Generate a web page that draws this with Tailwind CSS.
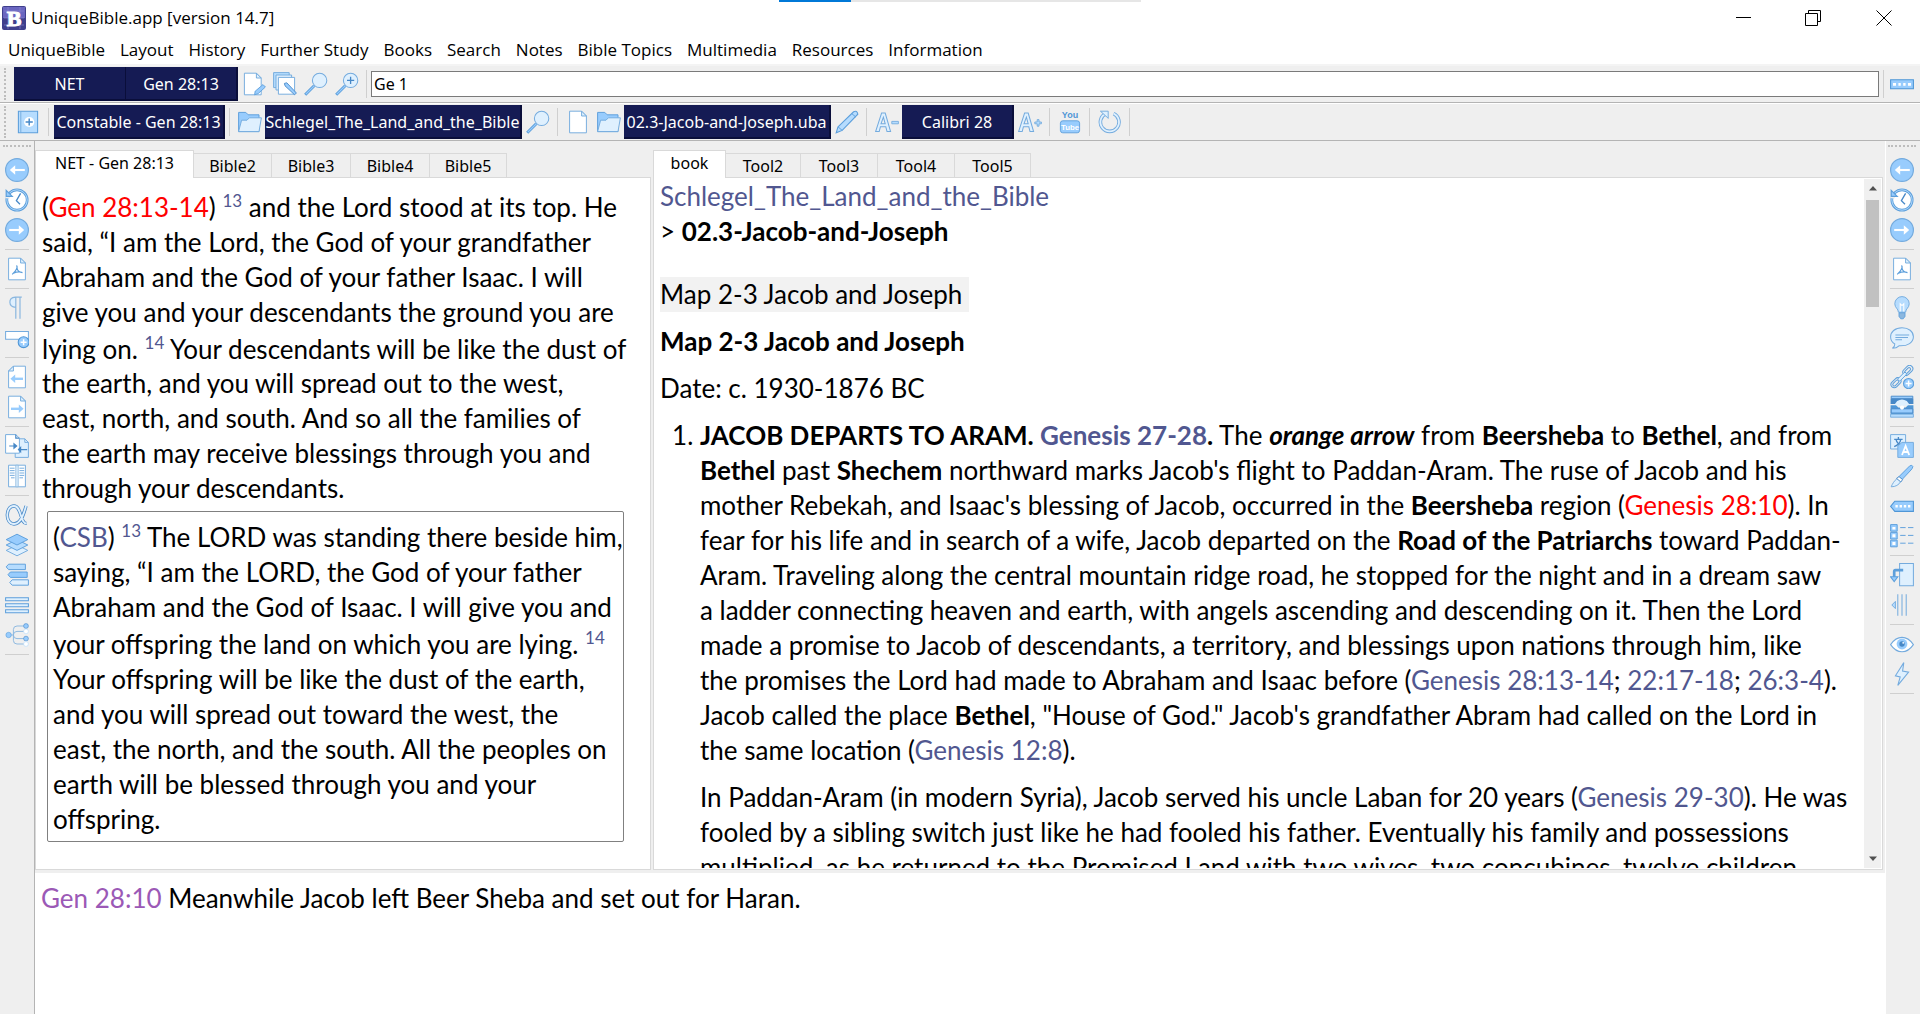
<!DOCTYPE html>
<html lang="en">
<head>
<meta charset="utf-8">
<title>UniqueBible.app</title>
<script src="https://cdn.jsdelivr.net/npm/@tailwindcss/browser@4"></script>
</head>
<body class="bg-white text-black font-['Open_Sans',sans-serif]">

<!-- Shared icon shapes -->
<svg class="hidden">
  <symbol id="left" viewBox="0 0 40 40"><circle cx="20" cy="20" r="19" fill="#98ccfd" stroke="#74abde" stroke-width="2"/><path d="M33 20H12" stroke="#fff" stroke-width="3.5"/><path d="M17 12 8 20l9 8z" fill="#fff"/></symbol>
  <symbol id="right" viewBox="0 0 40 40"><circle cx="20" cy="20" r="19" fill="#98ccfd" stroke="#74abde" stroke-width="2"/><path d="M7 20h21" stroke="#fff" stroke-width="3.5"/><path d="m23 12 9 8-9 8z" fill="#fff"/></symbol>
  <symbol id="clock" viewBox="0 0 40 40"><circle cx="20" cy="20" r="17" fill="#fff" stroke="#5d9fdb" stroke-width="4.5"/><circle cx="20" cy="20" r="17" fill="none" stroke="#b6dcfe" stroke-width="1.5"/><path d="M0 9h5l4 8H1z" fill="#efefef"/><path d="M2 4v10h10z" fill="#98ccfd" stroke="#5d9fdb" stroke-width="2"/><path d="m26 9-7 12 6 6" fill="none" stroke="#4788c7" stroke-width="2.2"/></symbol>
  <symbol id="pdf" viewBox="0 0 40 40"><path d="M6 2h20l8 8v28H6z" fill="#fff" stroke="#74abde" stroke-width="1.6"/><path d="M26 2v8h8z" fill="#dff0fe" stroke="#74abde" stroke-width="1.6"/><path d="M19 14c3 2 0 9-7 15m8-10c2 6 5 7 9 7-5-2-10-1-15 1" fill="none" stroke="#5d9fdb" stroke-width="2"/></symbol>
  <symbol id="pilcrow" viewBox="0 0 40 40"><path d="M18 2c-14 0-14 17 0 17z" fill="#dff0fe"/><path d="M28 2H17C5 3 5 18 18 19M18 2v36M25 2v36" fill="none" stroke="#8bb7df" stroke-width="2"/></symbol>
  <symbol id="addbar" viewBox="0 0 40 40"><path d="M1 4h38v13H1z" fill="#fff" stroke="#74abde" stroke-width="1.7"/><circle cx="31" cy="22" r="9" fill="#98ccfd" stroke="#4f96d6" stroke-width="1.8"/><path d="M31 17v10m-5-5h10" stroke="#fff" stroke-width="2.5"/></symbol>
  <symbol id="pageleft" viewBox="0 0 40 40"><path d="M34 2H14L6 10v28h28z" fill="#fff" stroke="#74abde" stroke-width="1.6"/><path d="M14 2v8H6z" fill="#dff0fe" stroke="#74abde" stroke-width="1.6"/><path d="M30 23H16" stroke="#98ccfd" stroke-width="4"/><path d="m17 16-8 7 8 7z" fill="#98ccfd"/></symbol>
  <symbol id="pageright" viewBox="0 0 40 40"><path d="M6 2h20l8 8v28H6z" fill="#fff" stroke="#74abde" stroke-width="1.6"/><path d="M26 2v8h8z" fill="#dff0fe" stroke="#74abde" stroke-width="1.6"/><path d="M10 23h14" stroke="#98ccfd" stroke-width="4"/><path d="m23 16 8 7-8 7z" fill="#98ccfd"/></symbol>
  <symbol id="compare" viewBox="0 0 40 40"><path d="M17 8h16l6 6v25H17z" fill="#dff0fe" stroke="#74abde" stroke-width="1.6"/><path d="M33 8v6h6" fill="none" stroke="#74abde" stroke-width="1.6"/><path d="M1 1h17l6 6v25H1z" fill="#fff" stroke="#74abde" stroke-width="1.6"/><path d="M18 1v6h6M7 20h9m10 6h11" fill="none" stroke="#4788c7" stroke-width="2"/><path d="m14 14 7 6-7 6zm13 6-6 6 6 6z" fill="#4788c7"/></symbol>
  <symbol id="columns" viewBox="0 0 40 40"><path d="M6 2h28v36H6z" fill="#fff" stroke="#74abde" stroke-width="1.6"/><path d="M18 2h4v36h-4z" fill="#dff0fe" stroke="#8bb7df" stroke-width="1.4"/><path d="M8 7h8m8 0h8M8 11h8m8 0h8M8 15h8m8 0h8M8 19h8m8 0h8M10 23h6m8 0h6" stroke="#74abde" stroke-width="1.6"/></symbol>
  <symbol id="alpha" viewBox="0 0 40 40"><path d="M35 5c-4 15-9 30-20 30C0 35 0 5 15 5c13 0 10 30 21 29" fill="none" stroke="#4788c7" stroke-width="5.5"/><path d="M35 5c-4 15-9 30-20 30C0 35 0 5 15 5c13 0 10 30 21 29" fill="none" stroke="#dff0fe" stroke-width="3"/></symbol>
  <symbol id="layers" viewBox="0 0 40 40"><path d="m2 29 18-9 18 9-18 9z" fill="#dff0fe" stroke="#74abde" stroke-width="1.6"/><path d="m2 20 18-9 18 9-18 9z" fill="#b6dcfe" stroke="#5d9fdb" stroke-width="1.6"/><path d="m2 11 18-9 18 9-18 9z" fill="#98ccfd" stroke="#5d9fdb" stroke-width="1.6"/></symbol>
  <symbol id="tags" viewBox="0 0 40 40"><path d="M6 2h28v9H6L2 6.500z" fill="#b6dcfe" stroke="#5d9fdb" stroke-width="1.6"/><path d="M9 15h28v9H9l-4-4.500z" fill="#98ccfd" stroke="#5d9fdb" stroke-width="1.600"/><path d="M12 28h27v9H12l-4-4.500z" fill="#dff0fe" stroke="#5d9fdb" stroke-width="1.600"/></symbol>
  <symbol id="rows" viewBox="0 0 40 40"><path d="M1 8h38v5H1zM1 18h38v5H1zM1 28h38v5H1z" fill="#dff0fe" stroke="#5d9fdb" stroke-width="1.700"/></symbol>
  <symbol id="tree" viewBox="0 0 40 40"><path d="M33 5H20q-6 0-6 6v18q0 6 6 6h13M6 20h8m0 0q0-6 6-6h13M14 20q0 6 6 6h13" fill="none" stroke="#8bb7df" stroke-width="1.600"/><circle cx="6" cy="20" r="4.500" fill="#98ccfd" stroke="#5d9fdb"/><circle cx="35" cy="5" r="4" fill="#98ccfd" stroke="#4788c7"/><circle cx="35" cy="14" r="4" fill="#fff" stroke="#b6dcfe"/><circle cx="35" cy="26" r="4" fill="#98ccfd" stroke="#4788c7"/><circle cx="35" cy="35" r="4" fill="#fff" stroke="#b6dcfe"/></symbol>
  <symbol id="bulb" viewBox="0 0 40 40"><path d="M14 27C14 21 8 20 8 13a12 12 0 0 1 24 0c0 7-6 8-6 14z" fill="#b6dcfe" stroke="#74abde" stroke-width="1.600"/><path d="M17 26V13l3 3 3-3v13" fill="none" stroke="#fff" stroke-width="1.800"/><path d="M15 28h10v6l-3 4h-4l-3-4z" fill="#8bb7df" stroke="#5d9fdb" stroke-width="1.500"/></symbol>
  <symbol id="chat" viewBox="0 0 40 40"><path d="M20 3C8 3 1 10 1 18c0 6 3 10 7 12 0 4-2 6-4 7 5 0 9-2 11-4 15 1 24-6 24-15S31 3 20 3z" fill="#dff0fe" stroke="#74abde" stroke-width="1.700"/><path d="M9 15h23M9 19h21M9 23h11" stroke="#74abde" stroke-width="1.700"/></symbol>
  <symbol id="link" viewBox="0 0 40 40"><g fill="none" stroke="#5d9fdb" stroke-width="1.700"><rect x="20" y="4" width="19" height="11" rx="5.500" transform="rotate(-45 29 9)"/><rect x="23" y="7" width="12" height="5" rx="2.500" transform="rotate(-45 29 9)"/><rect x="0" y="24" width="19" height="11" rx="5.500" transform="rotate(-45 10 29)"/><rect x="3" y="27" width="12" height="5" rx="2.500" transform="rotate(-45 10 29)"/></g><rect x="11" y="17" width="18" height="5" rx="2.500" fill="#dff0fe" stroke="#5d9fdb" stroke-width="1.500" transform="rotate(-45 20 19)"/><circle cx="31" cy="31" r="8.500" fill="#98ccfd" stroke="#5d9fdb" stroke-width="1.800"/><path d="M31 26v10m-5-5h10" stroke="#fff" stroke-width="2.500"/></symbol>
  <symbol id="archive" viewBox="0 0 40 40"><path d="M2 2h36v4H2z" fill="#98ccfd" stroke="#4788c7" stroke-width="1.500"/><path d="M1 6h38v9H1z" fill="#4788c7"/><path d="m6 18 6-8q8-5 16 0l6 8z" fill="#dff0fe"/><path d="M1 17h9l4 4h12l4-4h9v15H1z" fill="#4f96d6"/><path d="M2 23h36v7H2z" fill="#98ccfd" stroke="#4788c7" stroke-width="1.500"/><circle cx="20" cy="21" r="3.500" fill="#fff"/><path d="M1 32h38v5H1z" fill="#b6dcfe" stroke="#74abde" stroke-width="1.500"/></symbol>
  <symbol id="translate" viewBox="0 0 40 40"><path d="M1 1h25v24H1z" fill="#dff0fe" stroke="#74abde" stroke-width="1.600"/><path d="M7 9h14M14 5v4m4 0c-1 6-5 10-11 12m3-12c1 5 5 9 11 11" fill="none" stroke="#4788c7" stroke-width="2.200"/><path d="M13 39V20l7-6h19v25z" fill="#98ccfd" stroke="#74abde" stroke-width="1.600"/><path d="m20 35 6-15 6 15m-10-5h8" fill="none" stroke="#fff" stroke-width="3"/></symbol>
  <symbol id="scalpel" viewBox="0 0 40 40"><path d="M15 21 33 3q4-2 5 1 0 3-3 6L20 26z" fill="#98ccfd" stroke="#5d9fdb" stroke-width="1.600"/><path d="m12 24 6 5C15 35 9 38 2 38c2-5 5-10 10-14z" fill="#dff0fe" stroke="#74abde" stroke-width="1.600"/><path d="m11 24 7 6 3-4-6-5z" fill="#fff" stroke="#4788c7" stroke-width="1.600"/></symbol>
  <symbol id="tagdots" viewBox="0 0 40 40"><path d="M8 12h31v17H8l-7-8.500z" fill="#98ccfd" stroke="#4f96d6" stroke-width="1.800"/><path d="M9 20.500h4m3 0h4m3 0h4m3 0h4" stroke="#fff" stroke-width="4"/></symbol>
  <symbol id="list" viewBox="0 0 40 40"><path d="M1 1h11v11H1zM1 14h11v11H1zM1 27h11v11H1z" fill="#98ccfd" stroke="#5d9fdb" stroke-width="1.600"/><path d="M4 5h5v4H4zM4 17h5v5H4zM4 30h5v5H4z" fill="#fff"/><path d="M17 6h9m4 0h9M17 19h9m4 0h9M17 32h9m4 0h9" stroke="#5d9fdb" stroke-width="1.600"/></symbol>
  <symbol id="dock" viewBox="0 0 40 40"><path d="M16 1h23v37H16z" fill="#dff0fe" stroke="#74abde" stroke-width="1.700"/><path d="M22 12H9q-2 0-2 3v13" fill="none" stroke="#5d9fdb" stroke-width="4.500"/><path d="M1 23h12l-6 8z" fill="#98ccfd" stroke="#5d9fdb" stroke-width="1.800"/></symbol>
  <symbol id="collapse" viewBox="0 0 40 40"><path d="M9 14v12l-6-6z" fill="#b6dcfe" stroke="#74abde" stroke-width="1.600"/><path d="M13 2v36M20 2v36M27 2v36" stroke="#74abde" stroke-width="1.700"/></symbol>
  <symbol id="eye" viewBox="0 0 40 40"><path d="M1 21C12 5 28 5 39 21 28 37 12 37 1 21z" fill="#fff" stroke="#74abde" stroke-width="1.800"/><circle cx="20" cy="20" r="9" fill="#98ccfd"/><circle cx="20" cy="20" r="4.500" fill="#4788c7"/><circle cx="22" cy="18" r="1.500" fill="#fff"/></symbol>
  <symbol id="bolt" viewBox="0 0 40 40"><path d="M23 1 9 23l8 2-4 14 18-22-10-2z" fill="#dff0fe" stroke="#74abde" stroke-width="1.800"/></symbol>
  <symbol id="edit" viewBox="0 0 40 40"><path d="M4 2h20l8 8v28H4z" fill="#fff" stroke="#74abde" stroke-width="1.600"/><path d="M24 2v8h8z" fill="#dff0fe" stroke="#74abde" stroke-width="1.600"/><path d="m22 32 13-11 4 4-12 11-6 2z" fill="#98ccfd" stroke="#5d9fdb" stroke-width="1.500"/></symbol>
  <symbol id="copyedit" viewBox="0 0 40 40"><path d="M1 1h26v25H1z" fill="#b6dcfe" stroke="#74abde" stroke-width="1.600"/><path d="M5 5h26v25H5z" fill="#dff0fe" stroke="#74abde" stroke-width="1.600"/><path d="M9 9h27v28H9z" fill="#fff" stroke="#74abde" stroke-width="1.600"/><path d="m19 19 4-1 16 17-3 3-16-15z" fill="#98ccfd" stroke="#4788c7" stroke-width="1.500"/></symbol>
  <symbol id="search" viewBox="0 0 40 40"><path d="M17 23 2 38" stroke="#5d9fdb" stroke-width="5"/><path d="M17 23 3 37" stroke="#98ccfd" stroke-width="2"/><circle cx="26" cy="14" r="12" fill="#dff0fe" stroke="#74abde" stroke-width="1.700"/></symbol>
  <symbol id="zoomin" viewBox="0 0 40 40"><path d="M17 23 2 38" stroke="#5d9fdb" stroke-width="5"/><path d="M17 23 3 37" stroke="#98ccfd" stroke-width="2"/><circle cx="26" cy="14" r="12" fill="#dff0fe" stroke="#74abde" stroke-width="1.700"/><path d="M26 8v12m-6-6h12" stroke="#4788c7" stroke-width="2.200"/></symbol>
  <symbol id="page" viewBox="0 0 40 40"><path d="M6 2h20l8 8v28H6z" fill="#fff" stroke="#74abde" stroke-width="1.600"/><path d="M26 2v8h8z" fill="#dff0fe" stroke="#74abde" stroke-width="1.600"/></symbol>
  <symbol id="folder" viewBox="0 0 40 40"><path d="M1 36V4h12l4 4h18v28z" fill="#98ccfd" stroke="#5d9fdb" stroke-width="1.600"/><path d="M1 36 6 17h9l4-4h20l-4 23z" fill="#dff0fe" stroke="#74abde" stroke-width="1.600"/></symbol>
  <symbol id="book" viewBox="0 0 40 40"><path d="M4 2h32v36H4z" fill="#b6dcfe" stroke="#5d9fdb" stroke-width="1.800"/><path d="M8 2v36" stroke="#74abde" stroke-width="1.600"/><circle cx="22" cy="20" r="8.500" fill="#fff"/><path d="M22 14v12m-6-6h12" stroke="#4788c7" stroke-width="2.400"/></symbol>
  <symbol id="pencil" viewBox="0 0 40 40"><path d="m5 28 26-25q6-3 7 4L12 34 2 38z" fill="#b6dcfe" stroke="#5d9fdb" stroke-width="1.800"/><path d="m5 28 7 6M28 6l7 6" stroke="#5d9fdb" stroke-width="1.600"/></symbol>
  <symbol id="fontdown" viewBox="0 0 40 40"><path d="M1 36 11 5h6l9 31h-6l-2-8h-9l-2 8zM14 12l-4 11h7z" fill="#dff0fe" stroke="#74abde" stroke-width="1.700"/><path d="M28 19h11v4H28z" fill="#b6dcfe" stroke="#74abde" stroke-width="1.500"/></symbol>
  <symbol id="fontup" viewBox="0 0 40 40"><path d="M1 36 11 5h6l9 31h-6l-2-8h-9l-2 8zM14 12l-4 11h7z" fill="#dff0fe" stroke="#74abde" stroke-width="1.700"/><path d="M32 16h3v4h4v3h-4v4h-3v-4h-4v-3h4z" fill="#b6dcfe" stroke="#74abde" stroke-width="1.500"/></symbol>
  <symbol id="youtube" viewBox="0 0 40 40"><rect x="4" y="18" width="32" height="20" rx="4" fill="#98ccfd" stroke="#5d9fdb" stroke-width="1.500"/><text x="20" y="14" text-anchor="middle" font-family="Liberation Sans" font-weight="bold" font-size="15" fill="#4f96d6">You</text><text x="20" y="34" text-anchor="middle" font-family="Liberation Sans" font-weight="bold" font-size="13" fill="#fff">Tube</text></symbol>
  <symbol id="reload" viewBox="0 0 40 40"><path d="M26 6a15.500 15.500 0 1 1-13 0" fill="none" stroke="#74abde" stroke-width="6"/><path d="M26 6a15.500 15.500 0 1 1-13 0" fill="none" stroke="#dff0fe" stroke-width="3"/><path d="M4 2h13v12l-4-4z" fill="#dff0fe" stroke="#74abde" stroke-width="1.600"/></symbol>
  <symbol id="password" viewBox="0 0 40 40"><path d="M1 13h38v15H1z" fill="#98ccfd" stroke="#4f96d6" stroke-width="1.800"/><path d="M5 20.500h5m4 0h4m4 0h4m4 0h5" stroke="#fff" stroke-width="4.500"/></symbol>
</svg>

<div class="flex h-screen flex-col overflow-hidden">
  <!-- Title bar -->
  <header class="relative flex h-9 shrink-0 items-center pl-0.5">
    <div class="absolute left-[779px] top-0 flex h-0.5 w-[362px] bg-[#e6e6e6]"><div class="w-[72px] bg-[#0078d7]"></div></div>
    <svg class="size-6" viewBox="0 0 24 24" aria-hidden="true"><rect width="24" height="24" rx="2" fill="#3f3f8c"/><rect x="1" y="1" width="22" height="11" fill="#6a66c0"/><path d="M2 5h20M2 12h20M2 19h20M6 1v22M18 1v22" stroke="#8d8bd0" stroke-width=".6"/><text x="12" y="20" text-anchor="middle" font-family="Liberation Serif" font-weight="bold" font-size="22" fill="#fff" stroke="#fff">B</text></svg>
    <h1 class="ml-[5px] text-[17px]">UniqueBible.app [version 14.7]</h1>
    <div class="ml-auto flex items-center pr-7">
      <button aria-label="Minimize" class="mr-[53px]"><svg class="size-4" viewBox="0 0 16 16"><path d="M0 7.500h15" stroke="#000"/></svg></button>
      <button aria-label="Restore" class="mr-[55px]"><svg class="size-4" viewBox="0 0 16 16" fill="none" stroke="#000"><path d="M3.500 3.500v-3h12v11h-3M.5 3.500h12v12H.5z"/></svg></button>
      <button aria-label="Close"><svg class="size-4" viewBox="0 0 16 16"><path d="m.5.5 15 15m0-15-15 15" stroke="#000"/></svg></button>
    </div>
  </header>

  <nav class="flex h-[28px] shrink-0 items-center gap-[15px] pl-2 text-[17px]">
    <a href="#">UniqueBible</a><a href="#">Layout</a><a href="#">History</a><a href="#">Further Study</a><a href="#">Books</a><a href="#">Search</a><a href="#">Notes</a><a href="#">Bible Topics</a><a href="#">Multimedia</a><a href="#">Resources</a><a href="#">Information</a>
  </nav>

  <!-- Verse toolbar -->
  <div class="flex h-[39px] shrink-0 items-center border-b border-t-2 border-b-[#b4b4b4] border-t-[#f4f4f4] bg-[#efefef] font-['Noto_Sans',sans-serif] text-[16px]">
    <div class="ml-1 mr-2 h-8 border-l-2 border-dotted border-[#bdbdbd]"></div>
    <button class="h-[34px] w-28 border-b-2 border-r border-[#0a0e3a] bg-[#151b54] pt-0.5 text-white">NET</button>
    <button class="h-[34px] w-28 border-b-2 border-r-2 border-[#0a0e3a] bg-[#151b54] pt-0.5 text-white">Gen 28:13</button>
    <button aria-label="Edit note" class="flex w-[31px] justify-center"><svg class="size-6"><use href="#edit"/></svg></button>
    <button aria-label="Edit notes" class="flex w-[31px] justify-center"><svg class="size-6"><use href="#copyedit"/></svg></button>
    <button aria-label="Search" class="flex w-[31px] justify-center"><svg class="size-6"><use href="#search"/></svg></button>
    <button aria-label="Search more" class="flex w-[31px] justify-center"><svg class="size-6"><use href="#zoomin"/></svg></button>
    <div class="mx-1 h-7 w-px bg-[#cfcfcf]"></div>
    <input aria-label="Command" value="Ge 1" class="h-[26px] min-w-0 flex-1 border border-[#7a7a7a] bg-white px-0.5">
    <div class="ml-1 h-7 w-px bg-[#cfcfcf]"></div>
    <button aria-label="Toggle bars" class="flex w-9 justify-center"><svg class="size-6"><use href="#password"/></svg></button>
  </div>

  <!-- Resource toolbar -->
  <div class="flex h-[38px] shrink-0 items-center border-b border-t border-b-[#b4b4b4] border-t-white bg-[#efefef] font-['Noto_Sans',sans-serif] text-[16px]">
    <div class="ml-1 mr-[7px] h-8 border-l-2 border-dotted border-[#bdbdbd]"></div>
    <button aria-label="Commentary" class="flex w-[30px] justify-center"><svg class="size-6"><use href="#book"/></svg></button>
    <div class="mx-[5px] h-7 w-px bg-[#cfcfcf]"></div>
    <button class="h-[34px] w-[171px] border-b-2 border-r-2 border-[#0a0e3a] bg-[#151b54] pt-0.5 text-white">Constable - Gen 28:13</button>
    <div class="mx-1 h-7 w-px bg-[#cfcfcf]"></div>
    <button aria-label="Open book" class="flex w-[31px] justify-center"><svg class="size-6"><use href="#folder"/></svg></button>
    <button class="h-[34px] w-[257px] border-b-2 border-r-2 border-[#0a0e3a] bg-[#151b54] pt-0.5 text-white">Schlegel_The_Land_and_the_Bible</button>
    <button aria-label="Search book" class="flex w-[31px] justify-center"><svg class="size-6"><use href="#search"/></svg></button>
    <div class="mx-1 h-7 w-px bg-[#cfcfcf]"></div>
    <button aria-label="New note" class="flex w-[31px] justify-center"><svg class="size-6"><use href="#page"/></svg></button>
    <button aria-label="Open note" class="flex w-[31px] justify-center"><svg class="size-6"><use href="#folder"/></svg></button>
    <button class="h-[34px] w-[207px] border-b-2 border-r-2 border-[#0a0e3a] bg-[#151b54] pt-0.5 text-white">02.3-Jacob-and-Joseph.uba</button>
    <button aria-label="Edit" class="flex w-[31px] justify-center"><svg class="size-6"><use href="#pencil"/></svg></button>
    <div class="mx-1 h-7 w-px bg-[#cfcfcf]"></div>
    <button aria-label="Smaller font" class="flex w-[31px] justify-center"><svg class="size-6"><use href="#fontdown"/></svg></button>
    <button class="h-[34px] w-28 border-b-2 border-r-2 border-[#0a0e3a] bg-[#151b54] pt-0.5 text-white">Calibri 28</button>
    <button aria-label="Larger font" class="flex w-[31px] justify-center"><svg class="size-6"><use href="#fontup"/></svg></button>
    <div class="mx-1 h-7 w-px bg-[#cfcfcf]"></div>
    <button aria-label="YouTube" class="flex w-[31px] justify-center"><svg class="size-6"><use href="#youtube"/></svg></button>
    <div class="mx-1 h-7 w-px bg-[#cfcfcf]"></div>
    <button aria-label="Reload" class="flex w-[31px] justify-center"><svg class="size-6"><use href="#reload"/></svg></button>
    <div class="mx-1 h-7 w-px bg-[#cfcfcf]"></div>
  </div>

  <main class="flex min-h-0 flex-1 bg-[#efefef]">
    <!-- Left icon bar -->
    <aside class="flex w-[35px] shrink-0 flex-col items-center border-r border-[#b4b4b4] pt-1">
      <div class="mb-2 w-7 border-t-2 border-dotted border-[#bdbdbd]"></div>
      <button aria-label="Back" class="flex h-[30px] items-center"><svg class="size-6"><use href="#left"/></svg></button>
      <button aria-label="History" class="flex h-[30px] items-center"><svg class="size-6"><use href="#clock"/></svg></button>
      <button aria-label="Forward" class="flex h-[30px] items-center"><svg class="size-6"><use href="#right"/></svg></button>
      <div class="my-1 h-px w-6 bg-[#cfcfcf]"></div>
      <button aria-label="PDF" class="flex h-[30px] items-center"><svg class="size-6"><use href="#pdf"/></svg></button>
      <div class="my-1 h-px w-6 bg-[#cfcfcf]"></div>
      <button aria-label="Paragraphs" class="flex h-[30px] items-center"><svg class="size-6"><use href="#pilcrow"/></svg></button>
      <button aria-label="Subheadings" class="flex h-[30px] items-end"><svg class="size-6"><use href="#addbar"/></svg></button>
      <div class="my-1 h-px w-6 bg-[#cfcfcf]"></div>
      <button aria-label="Previous chapter" class="flex h-[30px] items-center"><svg class="size-6"><use href="#pageleft"/></svg></button>
      <button aria-label="Next chapter" class="flex h-[30px] items-center"><svg class="size-6"><use href="#pageright"/></svg></button>
      <div class="my-1 h-px w-6 bg-[#cfcfcf]"></div>
      <button aria-label="Compare" class="flex h-[30px] items-center"><svg class="size-6"><use href="#compare"/></svg></button>
      <button aria-label="Parallel" class="flex h-[30px] items-center"><svg class="size-6"><use href="#columns"/></svg></button>
      <div class="my-1 h-px w-6 bg-[#cfcfcf]"></div>
      <button aria-label="Original" class="flex h-[30px] items-center"><svg class="size-6"><use href="#alpha"/></svg></button>
      <button aria-label="Interlinear" class="flex h-[30px] items-center"><svg class="size-6"><use href="#layers"/></svg></button>
      <button aria-label="Linear" class="flex h-[30px] items-center"><svg class="size-6"><use href="#tags"/></svg></button>
      <button aria-label="Rows" class="flex h-[30px] items-center"><svg class="size-6"><use href="#rows"/></svg></button>
      <button aria-label="Tree" class="flex h-[30px] items-center"><svg class="size-6"><use href="#tree"/></svg></button>
      <div class="my-1 h-px w-6 bg-[#cfcfcf]"></div>
    </aside>

    <div class="flex min-w-0 flex-1 flex-col font-['Lato',sans-serif] text-[26px] leading-[35px]">
      <div class="flex min-h-0 flex-1 gap-0.5 pr-0.5">
        <!-- Bible pane -->
        <section class="flex w-1/3 shrink-0 flex-col">
          <div class="z-10 -mb-px flex h-[37px] shrink-0 items-end font-['Noto_Sans',sans-serif] text-[16px] leading-5">
            <button class="h-7 w-[159px] border border-b-0 border-[#d9d9d9] bg-white pb-1">NET - Gen 28:13</button>
            <button class="h-[25px] w-[78px] border-y border-r border-[#d9d9d9]">Bible2</button>
            <button class="h-[25px] w-[79px] border-y border-r border-[#d9d9d9]">Bible3</button>
            <button class="h-[25px] w-[79px] border-y border-r border-[#d9d9d9]">Bible4</button>
            <button class="h-[25px] w-[77px] border-y border-r border-[#d9d9d9]">Bible5</button>
          </div>
          <div class="min-h-0 flex-1 overflow-hidden whitespace-nowrap border border-[#d9d9d9] bg-white px-1.5 pt-2.5">
            <p>(<a href="#" class="text-[#ff0000]">Gen 28:13-14</a>) <a href="#" class="align-super text-[17px] leading-[26px] text-[#515790]">13</a> and the Lord stood at its top. He<br>said, “I am the Lord, the God of your grandfather<br>Abraham and the God of your father Isaac. I will<br>give you and your descendants the ground you are<br>lying on. <a href="#" class="align-super text-[17px] leading-[26px] text-[#515790]">14</a> Your descendants will be like the dust of<br>the earth, and you will spread out to the west,<br>east, north, and south. And so all the families of<br>the earth may receive blessings through you and<br>through your descendants.</p>
            <div class="ml-[5px] mr-5 mt-[5px] rounded-xs border border-[#808080] px-[5px] pb-1 pt-1.5">
              (<a href="#" class="text-[#515790]">CSB</a>) <a href="#" class="align-super text-[17px] leading-[26px] text-[#515790]">13</a> The LORD was standing there beside him,<br>saying, “I am the LORD, the God of your father<br>Abraham and the God of Isaac. I will give you and<br>your offspring the land on which you are lying. <a href="#" class="align-super text-[17px] leading-[26px] text-[#515790]">14</a><br>Your offspring will be like the dust of the earth,<br>and you will spread out toward the west, the<br>east, the north, and the south. All the peoples on<br>earth will be blessed through you and your<br>offspring.
            </div>
          </div>
        </section>

        <!-- Book pane -->
        <section class="flex min-w-0 flex-1 flex-col">
          <div class="z-10 -mb-px flex h-[37px] shrink-0 items-end font-['Noto_Sans',sans-serif] text-[16px] leading-5">
            <button class="h-7 w-[73px] border border-b-0 border-[#d9d9d9] bg-white pb-1">book</button>
            <button class="h-[25px] w-[75px] border-y border-r border-[#d9d9d9]">Tool2</button>
            <button class="h-[25px] w-[77px] border-y border-r border-[#d9d9d9]">Tool3</button>
            <button class="h-[25px] w-[77px] border-y border-r border-[#d9d9d9]">Tool4</button>
            <button class="h-[25px] w-[76px] border-y border-r border-[#d9d9d9]">Tool5</button>
          </div>
          <div class="flex min-h-0 flex-1 border border-[#d9d9d9] bg-white p-px">
            <div class="min-w-0 flex-1 overflow-hidden whitespace-nowrap pl-[5px]">
              <p><a href="#" class="text-[#515790]">Schlegel_The_Land_and_the_Bible</a><br>&gt; <b>02.3-Jacob-and-Joseph</b></p>
              <p class="mt-7"><span class="inline-block bg-[#f2f2f2] pr-[7px]">Map 2-3 Jacob and Joseph</span></p>
              <p class="mt-3 font-bold">Map 2-3 Jacob and Joseph</p>
              <p class="mt-3">Date: c. 1930-1876 BC</p>
              <ol class="mt-3 list-decimal pl-10">
                <li>
                  <p><b>JACOB DEPARTS TO ARAM. <a href="#" class="text-[#515790]">Genesis 27-28</a>.</b> The <b><i>orange arrow</i></b> from <b>Beersheba</b> to <b>Bethel</b>, and from<br><b>Bethel</b> past <b>Shechem</b> northward marks Jacob's flight to Paddan-Aram. The ruse of Jacob and his<br>mother Rebekah, and Isaac's blessing of Jacob, occurred in the <b>Beersheba</b> region (<a href="#" class="text-[#ff0000]">Genesis 28:10</a>). In<br>fear for his life and in search of a wife, Jacob departed on the <b>Road of the Patriarchs</b> toward Paddan-<br>Aram. Traveling along the central mountain ridge road, he stopped for the night and in a dream saw<br>a ladder connecting heaven and earth, with angels ascending and descending on it. Then the Lord<br>made a promise to Jacob of descendants, a territory, and blessings upon nations through him, like<br>the promises the Lord had made to Abraham and Isaac before (<a href="#" class="text-[#515790]">Genesis 28:13-14</a>; <a href="#" class="text-[#515790]">22:17-18</a>; <a href="#" class="text-[#515790]">26:3-4</a>).<br>Jacob called the place <b>Bethel</b>, "House of God." Jacob's grandfather Abram had called on the Lord in<br>the same location (<a href="#" class="text-[#515790]">Genesis 12:8</a>).</p>
                  <p class="mt-3">In Paddan-Aram (in modern Syria), Jacob served his uncle Laban for 20 years (<a href="#" class="text-[#515790]">Genesis 29-30</a>). He was<br>fooled by a sibling switch just like he had fooled his father. Eventually his family and possessions<br>multiplied, as he returned to the Promised Land with two wives, two concubines, twelve children</p>
                </li>
              </ol>
            </div>
            <div class="flex w-[17px] shrink-0 flex-col items-center bg-[#f0f0f0]">
              <svg class="h-[21px] w-2 shrink-0" viewBox="0 0 8 21"><path d="M0 11.500 4 7l4 4.500z" fill="#505050"/></svg>
              <div class="h-[107px] w-[13px] bg-[#c1c1c1]"></div>
              <svg class="mt-auto h-[21px] w-2 shrink-0" viewBox="0 0 8 21"><path d="M0 9.500h8L4 14z" fill="#505050"/></svg>
            </div>
          </div>
        </section>
      </div>
      <!-- Instant verse pane -->
      <section class="mt-[3px] h-[141px] shrink-0 bg-white px-1.5 pt-2"><p><a href="#" class="text-[#9b59b6]">Gen 28:10</a> Meanwhile Jacob left Beer Sheba and set out for Haran.</p></section>
    </div>

    <!-- Right icon bar -->
    <aside class="flex w-[35px] shrink-0 flex-col items-center border-l border-white pr-0.5 pt-1">
      <div class="mb-2 w-7 border-t-2 border-dotted border-[#bdbdbd]"></div>
      <button aria-label="Back" class="flex h-[30px] items-center"><svg class="size-6"><use href="#left"/></svg></button>
      <button aria-label="History" class="flex h-[30px] items-center"><svg class="size-6"><use href="#clock"/></svg></button>
      <button aria-label="Forward" class="flex h-[30px] items-center"><svg class="size-6"><use href="#right"/></svg></button>
      <div class="my-1 h-px w-6 bg-[#cfcfcf]"></div>
      <button aria-label="PDF" class="flex h-[30px] items-center"><svg class="size-6"><use href="#pdf"/></svg></button>
      <div class="my-1 h-px w-6 bg-[#cfcfcf]"></div>
      <button aria-label="Study" class="flex h-[30px] items-center"><svg class="size-6"><use href="#bulb"/></svg></button>
      <button aria-label="Comments" class="flex h-[30px] items-center"><svg class="size-6"><use href="#chat"/></svg></button>
      <div class="my-1 h-px w-6 bg-[#cfcfcf]"></div>
      <button aria-label="Cross references" class="flex h-[30px] items-center"><svg class="size-6"><use href="#link"/></svg></button>
      <button aria-label="Treasury" class="flex h-[30px] items-center"><svg class="size-6"><use href="#archive"/></svg></button>
      <div class="my-1 h-px w-6 bg-[#cfcfcf]"></div>
      <button aria-label="Translations" class="flex h-[30px] items-center"><svg class="size-6"><use href="#translate"/></svg></button>
      <button aria-label="Discourse" class="flex h-[30px] items-center"><svg class="size-6"><use href="#scalpel"/></svg></button>
      <button aria-label="Words" class="flex h-[30px] items-center"><svg class="size-6"><use href="#tagdots"/></svg></button>
      <button aria-label="Combo" class="flex h-[30px] items-center"><svg class="size-6"><use href="#list"/></svg></button>
      <div class="my-1 h-px w-6 bg-[#cfcfcf]"></div>
      <button aria-label="Landscape" class="flex h-[30px] items-center"><svg class="size-6"><use href="#dock"/></svg></button>
      <button aria-label="Parallel mode" class="flex h-[30px] items-center"><svg class="size-6"><use href="#collapse"/></svg></button>
      <div class="my-1 h-px w-6 bg-[#cfcfcf]"></div>
      <button aria-label="Instant highlight" class="flex h-[30px] items-center"><svg class="size-6"><use href="#eye"/></svg></button>
      <button aria-label="Instant lookup" class="flex h-[30px] items-center"><svg class="size-6"><use href="#bolt"/></svg></button>
      <div class="my-1 h-px w-6 bg-[#cfcfcf]"></div>
    </aside>
  </main>
</div>
</body>
</html>
